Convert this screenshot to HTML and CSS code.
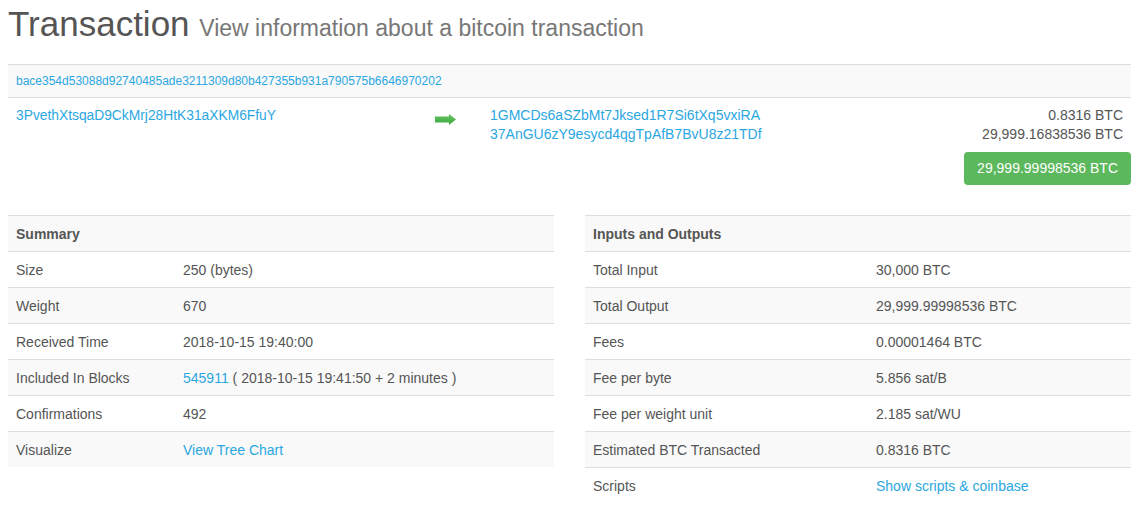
FILE: index.html
```html
<!DOCTYPE html>
<html lang="en">
<head>
    <meta charset="UTF-8">
    <title>Transaction</title>
    <link rel="stylesheet" href="styles.css">
</head>
<body>
    <h1 class="page-title">Transaction <small>View information about a bitcoin transaction</small></h1>

    <div class="tx-box">
        <div class="tx-hash"><a href="#">bace354d53088d92740485ade3211309d80b427355b931a790575b6646970202</a></div>
        <div class="tx-io">
            <div class="tx-in"><a href="#">3PvethXtsqaD9CkMrj28HtK31aXKM6FfuY</a></div>
            <div class="tx-arrow">
                <svg width="21" height="11" viewBox="0 0 21 11">
                    <defs>
                        <linearGradient id="g" x1="0" y1="0" x2="0" y2="1">
                            <stop offset="0" stop-color="#62c462"/>
                            <stop offset="1" stop-color="#3fa83f"/>
                        </linearGradient>
                    </defs>
                    <path d="M0 2.5 H14 V0 L21 5.5 L14 11 V8.5 H0 Z" fill="url(#g)"/>
                </svg>
            </div>
            <div class="tx-out">
                <div class="out-row"><a href="#">1GMCDs6aSZbMt7Jksed1R7Si6tXq5vxiRA</a><span>0.8316 BTC</span></div>
                <div class="out-row"><a href="#">37AnGU6zY9esycd4qgTpAfB7BvU8z21TDf</a><span>29,999.16838536 BTC</span></div>
            </div>
        </div>
        <div class="tx-total"><span class="btn-total">29,999.99998536 BTC</span></div>
    </div>

    <div class="cols">
        <table class="info">
            <tr><th colspan="2">Summary</th></tr>
            <tr><td class="k1">Size</td><td>250 (bytes)</td></tr>
            <tr><td class="k1">Weight</td><td>670</td></tr>
            <tr><td class="k1">Received Time</td><td>2018-10-15 19:40:00</td></tr>
            <tr><td class="k1">Included In Blocks</td><td><a href="#">545911</a> ( 2018-10-15 19:41:50 + 2 minutes )</td></tr>
            <tr><td class="k1">Confirmations</td><td>492</td></tr>
            <tr><td class="k1">Visualize</td><td><a href="#">View Tree Chart</a></td></tr>
        </table>
        <table class="info">
            <tr><th colspan="2">Inputs and Outputs</th></tr>
            <tr><td class="k2">Total Input</td><td>30,000 BTC</td></tr>
            <tr><td class="k2">Total Output</td><td>29,999.99998536 BTC</td></tr>
            <tr><td class="k2">Fees</td><td>0.00001464 BTC</td></tr>
            <tr><td class="k2">Fee per byte</td><td>5.856 sat/B</td></tr>
            <tr><td class="k2">Fee per weight unit</td><td>2.185 sat/WU</td></tr>
            <tr><td class="k2">Estimated BTC Transacted</td><td>0.8316 BTC</td></tr>
            <tr><td class="k2">Scripts</td><td><a href="#">Show scripts &amp; coinbase</a></td></tr>
        </table>
    </div>
</body>
</html>
```
FILE: styles.css
```css
body {
    margin: 0;
    padding: 0 9px 0 8px;
    font-family: "Liberation Sans", Arial, sans-serif;
    font-size: 14px;
    color: #555;
    background: #fff;
}
a {
    color: #2ba7e1;
    text-decoration: none;
}
.page-title {
    margin: 0;
    padding-top: 4px;
    height: 60px;
    font-size: 35px;
    font-weight: normal;
    line-height: 40px;
    color: #555;
}
.page-title small {
    font-size: 23px;
    color: #777;
}
.tx-box {
    margin-bottom: 30px;
}
.tx-hash {
    background: #f9f9f9;
    border-top: 1px solid #ddd;
    border-bottom: 1px solid #ddd;
    padding: 0 8px;
    height: 32px;
    line-height: 32px;
    font-size: 12px;
}
.tx-io {
    display: flex;
    padding: 8px 8px 0 8px;
    line-height: 19px;
}
.tx-in {
    width: 419px;
    font-size: 13.8px;
}
.tx-arrow {
    width: 55px;
    padding-top: 5px;
}
.tx-out {
    flex: 1;
}
.out-row {
    display: flex;
    justify-content: space-between;
}
.tx-total {
    display: flex;
    justify-content: flex-end;
    margin-top: 8px;
}
.btn-total {
    display: block;
    background: #5cb85c;
    color: #fff;
    border-radius: 4px;
    padding: 0 13px;
    height: 33px;
    line-height: 33px;
    font-size: 14px;
}
.cols {
    display: flex;
    justify-content: space-between;
    align-items: flex-start;
}
.info {
    width: 546px;
    border-collapse: collapse;
}
.info th, .info td {
    border-top: 1px solid #ddd;
    padding: 0 8px;
    height: 35px;
    text-align: left;
    vertical-align: middle;
}
.info th {
    font-weight: bold;
    color: #555;
}
.info tr:nth-child(odd) {
    background: #f9f9f9;
}
.k1 {
    width: 151px;
}
.k2 {
    width: 267px;
}
```
